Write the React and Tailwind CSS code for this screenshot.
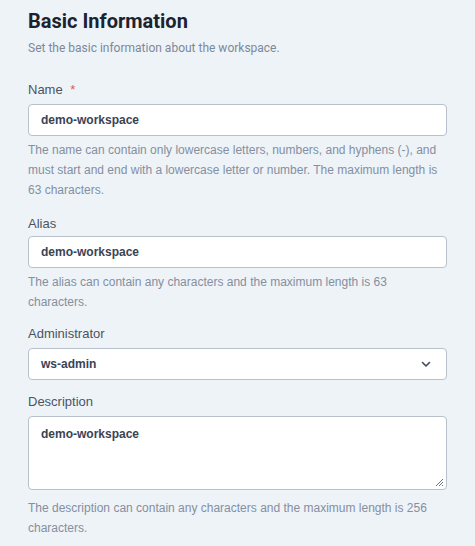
import React from "react";

function Chevron() {
  return (
    <svg width="12" height="12" viewBox="0 0 12 12" fill="none" stroke="#3f4a5a" strokeWidth="1.6" strokeLinecap="round" strokeLinejoin="round">
      <path d="M2.5 4.5 L6 8 L9.5 4.5" />
    </svg>
  );
}

const helper = "text-[12px] leading-[20px] text-[#848fa0] mt-[4px]";
const label = "text-[13px] leading-[20px] text-[#4a5363]";
const box = "w-full rounded-[4px] border border-[#b9c1cd] bg-white";
const val = "text-[12px] font-bold text-[#3a4354]";

export default function App() {
  return (
    <div className="min-h-[546px] w-[475px] bg-[#eef3f8] px-[28px] pt-[7px] font-['Liberation_Sans',Arial,sans-serif]">
      <h1 className="text-[20px] leading-[28px] font-bold text-[#1c2330] font-['Roboto',sans-serif]">Basic Information</h1>
      <p className="mt-[3px] text-[12px] leading-[20px] text-[#7d889a] font-['Roboto',sans-serif]">Set the basic information about the workspace.</p>

      <div className="mt-[22px]">
        <div className={label}>Name <span className="ml-[4px] text-[#e05a5a]">*</span></div>
        <div className={`${box} mt-[4px] h-[32px] flex items-center px-[12px]`}>
          <span className={val}>demo-workspace</span>
        </div>
        <p className={helper}>The name can contain only lowercase letters, numbers, and hyphens (-), and must start and end with a lowercase letter or number. The maximum length is 63 characters.</p>
      </div>

      <div className="mt-[14px]">
        <div className={label}>Alias</div>
        <div className={`${box} mt-[2px] h-[32px] flex items-center px-[12px]`}>
          <span className={val}>demo-workspace</span>
        </div>
        <p className={helper}>The alias can contain any characters and the maximum length is 63 characters.</p>
      </div>

      <div className="mt-[12px]">
        <div className={label}>Administrator</div>
        <div className={`${box} mt-[4px] h-[32px] flex items-center justify-between pl-[12px] pr-[14px]`}>
          <span className={val}>ws-admin</span>
          <Chevron />
        </div>
      </div>

      <div className="mt-[12px]">
        <div className={label}>Description</div>
        <div className={`${box} relative mt-[4px] h-[74px] px-[12px] pt-[4px]`}>
          <span className={val}>demo-workspace</span>
          <svg className="absolute right-[2px] bottom-[2px]" width="9" height="9" viewBox="0 0 9 9" stroke="#6b7280" strokeWidth="1">
            <path d="M8 1 L1 8 M8 4 L4 8 M8 7 L7 8" />
          </svg>
        </div>
        <p className={`${helper} mt-[8px]`}>The description can contain any characters and the maximum length is 256 characters.</p>
      </div>
    </div>
  );
}
